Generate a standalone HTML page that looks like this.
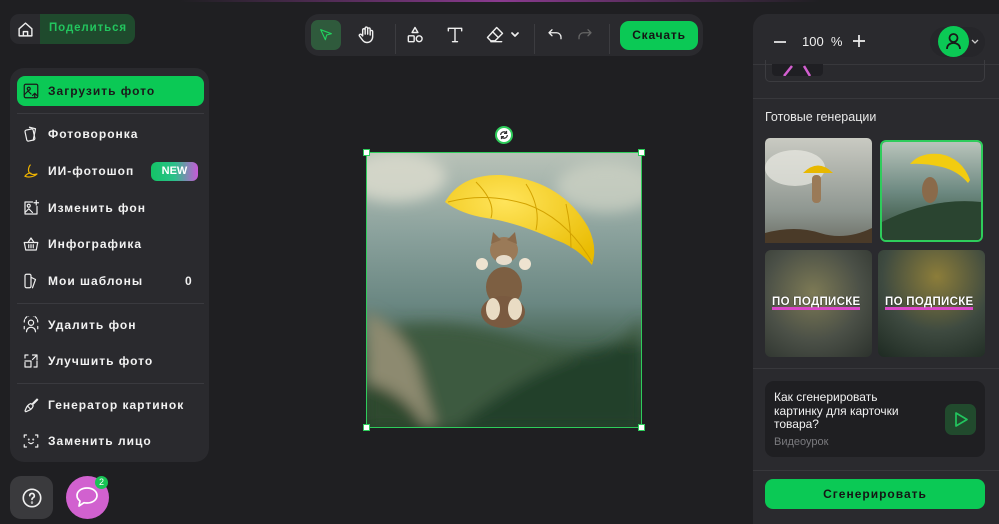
<!DOCTYPE html>
<html><head><meta charset="utf-8"><style>
*{margin:0;padding:0;box-sizing:border-box}
body{width:999px;height:524px;background:#1f1f22;font-family:"Liberation Sans","DejaVu Sans",sans-serif;position:relative;overflow:hidden;color:#f0f0f0}
.a{position:absolute}
.topline{left:180px;top:0;width:640px;height:2px;background:linear-gradient(90deg,#1f1f22,#8a3a8f,#1f1f22)}
.panel{background:#2a2a2e}
.item{position:absolute;left:20px;height:24px;display:flex;align-items:center;font-weight:bold;font-size:12px;letter-spacing:1px;color:#f2f2f2}
.item svg{width:18px;height:18px;margin-right:8px;fill:none;stroke:#eee;stroke-width:1.6;stroke-linecap:round;stroke-linejoin:round}
.div{position:absolute;left:17px;width:187px;height:1px;background:#3a3a3f}
.tb svg{position:absolute;fill:none;stroke:#eee;stroke-width:1.7;stroke-linecap:round;stroke-linejoin:round}
.h{position:absolute;width:7px;height:7px;background:#fff;border:1px solid #2ecc5b}
.sub{position:absolute;font-weight:bold;font-size:11.5px;color:#fff;letter-spacing:.3px;text-shadow:0 0 1px #000;border-bottom:3px solid #d946c8;line-height:10px}
</style></head><body>
<div class="a topline"></div>

<div class="a" style="left:10px;top:14px;width:125px;height:30px;border-radius:9px;background:#2a2a2e;overflow:hidden">
 <div class="a" style="left:30px;top:0;width:95px;height:30px;background:#1f4a2d"></div>
 <svg class="a" style="left:7px;top:7px" width="17" height="17" viewBox="0 0 24 24" fill="none" stroke="#eee" stroke-width="2" stroke-linejoin="round"><path d="M3 11L12 3l9 8v10H3z"/><path d="M9 21v-6h6v6"/></svg>
 <div class="a" style="left:39px;top:8px;font-size:11.5px;font-weight:bold;color:#22c55e;letter-spacing:.9px">Поделиться</div>
</div>

<div class="a panel" style="left:10px;top:68px;width:199px;height:394px;border-radius:14px"></div>
<div class="a" style="left:17px;top:76px;width:187px;height:30px;border-radius:8px;background:#0bc955"></div>
<div class="item" style="top:79px;left:22px;color:#1a1a1a"><svg viewBox="0 0 24 24" style="stroke:#1a1a1a"><rect x="3" y="3" width="18" height="18" rx="2"/><circle cx="9" cy="9" r="2"/><path d="M3 17l5-5 4 4"/><path d="M17 21v-6m-3 3l3-3 3 3"/></svg>Загрузить фото</div>
<div class="div" style="top:113px"></div>
<div class="item" style="top:122px;left:22px"><svg viewBox="0 0 24 24"><rect x="5" y="6" width="11" height="15" rx="2" transform="rotate(-12 10 13)"/><path d="M10 3l8 2-3 15"/></svg>Фотоворонка</div>
<div class="item" style="top:159px;left:22px"><svg viewBox="0 0 24 24" style="stroke:#f0b400"><path d="M4 19c4 2 12 1 16-3-4 1-9 1-11-3-1-3 0-7 2-9"/><path d="M4 19c2-3 6-5 8-4"/></svg>ИИ-фотошоп</div>
<div class="a" style="left:151px;top:162px;width:47px;height:19px;border-radius:6px;background:linear-gradient(90deg,#14c466,#2bc08a 50%,#c85ad8);font-size:11px;font-weight:bold;color:#fff;text-align:center;line-height:19px">NEW</div>
<div class="item" style="top:196px;left:22px"><svg viewBox="0 0 24 24"><path d="M14 4H4v16h16V10"/><circle cx="9" cy="9" r="2"/><path d="M4 18l5-5 5 5"/><path d="M19 2v6m-3-3h6"/></svg>Изменить фон</div>
<div class="item" style="top:232px;left:22px"><svg viewBox="0 0 24 24"><path d="M3 10h18l-2 10H5z"/><path d="M8 10l4-6 4 6M9 13v4M12 13v4M15 13v4"/></svg>Инфографика</div>
<div class="item" style="top:269px;left:22px"><svg viewBox="0 0 24 24"><rect x="4" y="3" width="8" height="18" rx="2"/><path d="M12 7l6 3-4 11"/></svg>Мои шаблоны</div>
<div class="a" style="left:185px;top:274px;font-size:12px;font-weight:bold">0</div>
<div class="div" style="top:303px"></div>
<div class="item" style="top:313px;left:22px"><svg viewBox="0 0 24 24" stroke-dasharray="3 2"><circle cx="12" cy="9" r="3.5" stroke-dasharray="none"/><path d="M6 21c0-4 3-6 6-6s6 2 6 6" stroke-dasharray="none"/><path d="M3 8a9 9 0 0 1 18 0M3 14v4M21 14v4"/></svg>Удалить фон</div>
<div class="item" style="top:349px;left:22px"><svg viewBox="0 0 24 24"><path d="M4 8V4h4M20 12v8h-4M4 14v6h8V12H4"/><path d="M14 4h6v6M20 4l-6 6"/></svg>Улучшить фото</div>
<div class="div" style="top:383px"></div>
<div class="item" style="top:393px;left:22px"><svg viewBox="0 0 24 24"><path d="M14 10l6-6 1 1-6 6"/><path d="M4 20c2-6 4-9 8-10l3 3c-1 4-4 6-10 8z"/><path d="M8 14l3 3"/></svg>Генератор картинок</div>
<div class="item" style="top:429px;left:22px"><svg viewBox="0 0 24 24"><path d="M3 7V4h3M18 4h3v3M21 17v3h-3M6 20H3v-3"/><path d="M9 14c2 2 4 2 6 0"/><circle cx="9" cy="10" r=".5"/><circle cx="15" cy="10" r=".5"/></svg>Заменить лицо</div>

<div class="a" style="left:10px;top:476px;width:43px;height:43px;border-radius:11px;background:#3a3a3d"></div>
<svg class="a" style="left:21px;top:487px" width="22" height="22" viewBox="0 0 24 24" fill="none" stroke="#eee" stroke-width="1.8" stroke-linecap="round"><circle cx="12" cy="12" r="9.5"/><path d="M9.5 9.5a2.5 2.5 0 1 1 3.5 2.3c-.7.4-1 .9-1 1.7"/><circle cx="12" cy="17" r=".4"/></svg>
<div class="a" style="left:66px;top:476px;width:43px;height:43px;border-radius:50%;background:#d161cf"></div>
<svg class="a" style="left:74px;top:485px" width="26" height="24" viewBox="0 0 26 24" fill="none" stroke="#fff" stroke-width="1.7" stroke-linejoin="round"><path d="M13 3c6 0 10 3.5 10 7.5S19 18 13 18c-1 0-2 0-3-.3L5 21l1-5c-2-1.5-3-3.3-3-5.5C3 6.5 7 3 13 3z"/></svg>
<div class="a" style="left:95px;top:476px;width:13px;height:13px;border-radius:50%;background:#18c455;font-size:9px;color:#fff;text-align:center;line-height:13px">2</div>

<div class="a tb panel" style="left:305px;top:14px;width:398px;height:42px;border-radius:14px">
 <div class="a" style="left:6px;top:6px;width:30px;height:30px;border-radius:7px;background:#2f5a3c"></div>
 <svg style="left:13px;top:13px;stroke:#22d35f" width="16" height="16" viewBox="0 0 24 24"><path d="M4 4l16 6-7 2-2 7z"/></svg>
 <svg style="left:51px;top:11px" width="20" height="20" viewBox="0 0 24 24"><path d="M8 13V6a1.5 1.5 0 0 1 3 0v5V4a1.5 1.5 0 0 1 3 0v7V5a1.5 1.5 0 0 1 3 0v7V8a1.5 1.5 0 0 1 3 0v6c0 4-3 7-7 7-3 0-4.5-1.5-6-4l-3-4a1.5 1.5 0 0 1 2.5-1.5z"/></svg>
 <div class="a" style="left:90px;top:10px;width:1px;height:30px;background:#3c3c40"></div>
 <svg style="left:100px;top:11px" width="20" height="20" viewBox="0 0 24 24"><path d="M12 3l3.5 6h-7z"/><rect x="4" y="13" width="7" height="7" rx="1"/><circle cx="17" cy="16.5" r="3.5"/></svg>
 <svg style="left:140px;top:11px" width="20" height="20" viewBox="0 0 24 24"><path d="M4 7V4h16v3M12 4v16M9 20h6"/></svg>
 <svg style="left:180px;top:11px" width="20" height="20" viewBox="0 0 24 24"><path d="M7 20h13M14 3l7 7-9 9H7l-4-4z M9 8l7 7"/></svg>
 <svg style="left:206px;top:18px" width="8" height="6" viewBox="0 0 8 6"><path d="M1 1l3 3 3-3"/></svg>
 <div class="a" style="left:229px;top:10px;width:1px;height:30px;background:#3c3c40"></div>
 <svg style="left:240px;top:12px" width="20" height="18" viewBox="0 0 24 24"><path d="M4 9h10a6 6 0 0 1 6 6v2M8 5L4 9l4 4"/></svg>
 <svg style="left:270px;top:12px;stroke:#666" width="20" height="18" viewBox="0 0 24 24"><path d="M20 9H10a6 6 0 0 0-6 6v2M16 5l4 4-4 4"/></svg>
 <div class="a" style="left:304px;top:10px;width:1px;height:30px;background:#3c3c40"></div>
 <div class="a" style="left:315px;top:7px;width:78px;height:29px;border-radius:9px;background:#0bc955;color:#151515;font-weight:bold;font-size:12px;text-align:center;line-height:29px;letter-spacing:.8px">Скачать</div>
</div>

<svg class="a" style="left:366px;top:152px" width="276" height="276" viewBox="0 0 276 276">
 <defs>
  <linearGradient id="sky" x1="0" y1="0" x2="0" y2="1"><stop offset="0" stop-color="#b9c2b8"/><stop offset=".3" stop-color="#8aa19c"/><stop offset=".55" stop-color="#6a8782"/><stop offset=".75" stop-color="#3d5a44"/><stop offset="1" stop-color="#263d2b"/></linearGradient>
  <filter id="bl"><feGaussianBlur stdDeviation="7"/></filter>
  <radialGradient id="par" cx=".4" cy=".3" r=".8"><stop offset="0" stop-color="#ffe45a"/><stop offset="1" stop-color="#e9bb00"/></radialGradient>
 </defs>
 <rect width="276" height="276" fill="url(#sky)"/>
 <g filter="url(#bl)">
  <ellipse cx="30" cy="25" rx="50" ry="25" fill="#dcdcce" opacity=".8"/>
  <ellipse cx="240" cy="35" rx="50" ry="25" fill="#d0d4c6" opacity=".7"/>
  <path d="M0 180 Q80 160 160 190 T276 165 V276 H0z" fill="#3d5a40"/>
  <path d="M0 160 Q30 170 50 210 L70 276 H0z" fill="#8d8a70"/>
  <path d="M0 230 Q40 240 60 276 H0z" fill="#2f4a2e"/>
  <path d="M90 276 Q180 200 276 190 V276z" fill="#22402a"/>
 </g>
 <path d="M79 50 Q95 22 135 23 Q195 28 222 75 Q232 95 226 113 Q210 95 190 88 Q150 70 120 66 Q95 62 79 50z" fill="url(#par)"/>
 <path d="M82 50 Q120 40 160 52 Q200 66 226 110 M110 30 Q130 50 125 66 M160 32 Q175 55 170 78 M200 52 Q205 75 205 96" fill="none" stroke="#d2a200" stroke-width="1"/>
 <ellipse cx="138" cy="135" rx="18" ry="20" fill="#7d5f42"/>
 <ellipse cx="138" cy="98" rx="14" ry="13" fill="#9a7a58"/>
 <path d="M125 92l2-12 8 8M151 92l-2-12-8 8" fill="#8a6a4a"/>
 <ellipse cx="138" cy="108" rx="8" ry="5" fill="#e7dccb"/>
 <circle cx="116" cy="112" r="6" fill="#eee3d0"/><circle cx="159" cy="112" r="6" fill="#eee3d0"/>
 <ellipse cx="137" cy="160" rx="22" ry="16" fill="#7a5a40"/>
 <ellipse cx="127" cy="157" rx="7" ry="11" fill="#e9dcc4"/><ellipse cx="149" cy="157" rx="7" ry="11" fill="#e9dcc4"/>
</svg>
<div class="a" style="left:366px;top:152px;width:276px;height:276px;border:1.5px solid #2ecc5b"></div>
<div class="h" style="left:363px;top:149px"></div><div class="h" style="left:638px;top:149px"></div>
<div class="h" style="left:363px;top:424px"></div><div class="h" style="left:638px;top:424px"></div>
<div class="a" style="left:495px;top:126px;width:18px;height:18px;border-radius:50%;background:#fff;border:2px solid #2ecc5b"></div>
<svg class="a" style="left:499px;top:130px" width="10" height="10" viewBox="0 0 12 12" fill="none" stroke="#333" stroke-width="1.5"><path d="M2 6a4 4 0 0 1 7-2.5M10 6a4 4 0 0 1-7 2.5M9 1v3H6M3 11V8h3"/></svg>

<div class="a panel" style="left:753px;top:14px;width:246px;height:510px;border-radius:14px 0 0 0"></div>
<svg class="a" style="left:772px;top:34px" width="16" height="16" viewBox="0 0 16 16" stroke="#eee" stroke-width="1.7"><path d="M2 8h12"/></svg>
<div class="a" style="left:802px;top:34px;font-size:13px;color:#eee">100&nbsp; %</div>
<svg class="a" style="left:851px;top:33px" width="16" height="16" viewBox="0 0 16 16" stroke="#eee" stroke-width="1.7"><path d="M2 8h12M8 2v12"/></svg>
<div class="a" style="left:930px;top:27px;width:55px;height:30px;border-radius:15px;background:#26262a"></div>
<div class="a" style="left:938px;top:26px;width:31px;height:31px;border-radius:50%;background:#0bc955"></div>
<svg class="a" style="left:945px;top:32px" width="17" height="18" viewBox="0 0 17 18" fill="none" stroke="#1a1a1a" stroke-width="1.8"><circle cx="8.5" cy="6" r="4"/><path d="M2 17c0-4 3-6 6.5-6s6.5 2 6.5 6"/></svg>
<svg class="a" style="left:971px;top:39px" width="8" height="6" viewBox="0 0 8 6" fill="none" stroke="#ccc" stroke-width="1.3"><path d="M1 1l3 3 3-3"/></svg>
<div class="a" style="left:753px;top:64px;width:246px;height:1px;background:#38383c"></div>
<div class="a" style="left:765px;top:60px;width:220px;height:22px;border:1px solid #3c3c40;border-top:none;border-radius:0 0 5px 5px"></div>
<div class="a" style="left:772px;top:64px;width:51px;height:12px;background:#1f1f23;border-radius:0 0 4px 4px"></div>
<svg class="a" style="left:780px;top:64px" width="40" height="12" viewBox="0 0 40 12" stroke="#d35fd0" stroke-width="2.5"><path d="M4 12l8-10M30 12l-6-10"/></svg>
<div class="a" style="left:753px;top:98px;width:246px;height:1px;background:#38383c"></div>
<div class="a" style="left:765px;top:110px;font-size:12.5px;color:#e8e8e8">Готовые генерации</div>

<svg class="a" style="left:765px;top:138px" width="107" height="105" viewBox="0 0 107 105"><defs><linearGradient id="s1" x1="0" y1="0" x2="0" y2="1"><stop offset="0" stop-color="#c9cac2"/><stop offset=".7" stop-color="#8e9690"/><stop offset="1" stop-color="#6d7067"/></linearGradient></defs><rect width="107" height="105" rx="5" fill="url(#s1)"/><ellipse cx="30" cy="30" rx="30" ry="18" fill="#e9e9e3" opacity=".7"/><path d="M38 35q15-15 30 0z" fill="#e8b800"/><rect x="47" y="37" width="9" height="28" rx="4" fill="#9a7a58"/><path d="M0 105V95q30-8 55 0t52-5v15z" fill="#4a3a28"/></svg>
<div class="a" style="left:880px;top:140px;width:103px;height:102px;border:2px solid #2ecc5b;border-radius:6px;overflow:hidden">
<svg width="99" height="98" viewBox="0 0 99 98"><defs><linearGradient id="s2" x1="0" y1="0" x2="0" y2="1"><stop offset="0" stop-color="#b9c4bb"/><stop offset=".5" stop-color="#6e8a82"/><stop offset="1" stop-color="#2f4a35"/></linearGradient></defs><rect width="99" height="98" fill="url(#s2)"/><path d="M28 22q10-12 30-10q22 4 30 26l-2 3q-10-12-26-16q-18-4-32-3z" fill="#f2cc10"/><ellipse cx="48" cy="48" rx="8" ry="13" fill="#8a6a4a"/><path d="M0 80q50-25 99-20v38H0z" fill="#2a4430"/></svg></div>

<div class="a" style="left:765px;top:250px;width:107px;height:107px;border-radius:6px;background:radial-gradient(circle at 45% 40%,#7d7a55,#4b5047 55%,#2c322d)"></div>
<div class="a" style="left:878px;top:250px;width:107px;height:107px;border-radius:6px;background:radial-gradient(circle at 55% 25%,#8c7d3a,#3e4a40 55%,#1e2a22)"></div>
<div class="sub" style="left:772px;top:297px">ПО ПОДПИСКЕ</div>
<div class="sub" style="left:885px;top:297px">ПО ПОДПИСКЕ</div>

<div class="a" style="left:753px;top:368px;width:246px;height:1px;background:#38383c"></div>
<div class="a" style="left:765px;top:381px;width:220px;height:76px;border-radius:9px;background:#1f1f22"></div>
<div class="a" style="left:774px;top:391px;font-size:12px;line-height:13.5px;color:#f2f2f2;width:140px">Как сгенерировать картинку для карточки товара?</div>
<div class="a" style="left:774px;top:436px;font-size:11px;color:#7a7a7e">Видеоурок</div>
<div class="a" style="left:945px;top:404px;width:31px;height:31px;border-radius:7px;background:#214a2d"></div>
<svg class="a" style="left:953px;top:411px" width="16" height="17" viewBox="0 0 16 17" fill="none" stroke="#22c55e" stroke-width="1.7" stroke-linejoin="round"><path d="M3 2l11 6.5L3 15z"/></svg>
<div class="a" style="left:753px;top:470px;width:246px;height:1px;background:#38383c"></div>
<div class="a" style="left:765px;top:479px;width:220px;height:30px;border-radius:8px;background:#0bc955;color:#151515;font-weight:bold;font-size:12px;text-align:center;line-height:30px;letter-spacing:1px">Сгенерировать</div>
</body></html>
